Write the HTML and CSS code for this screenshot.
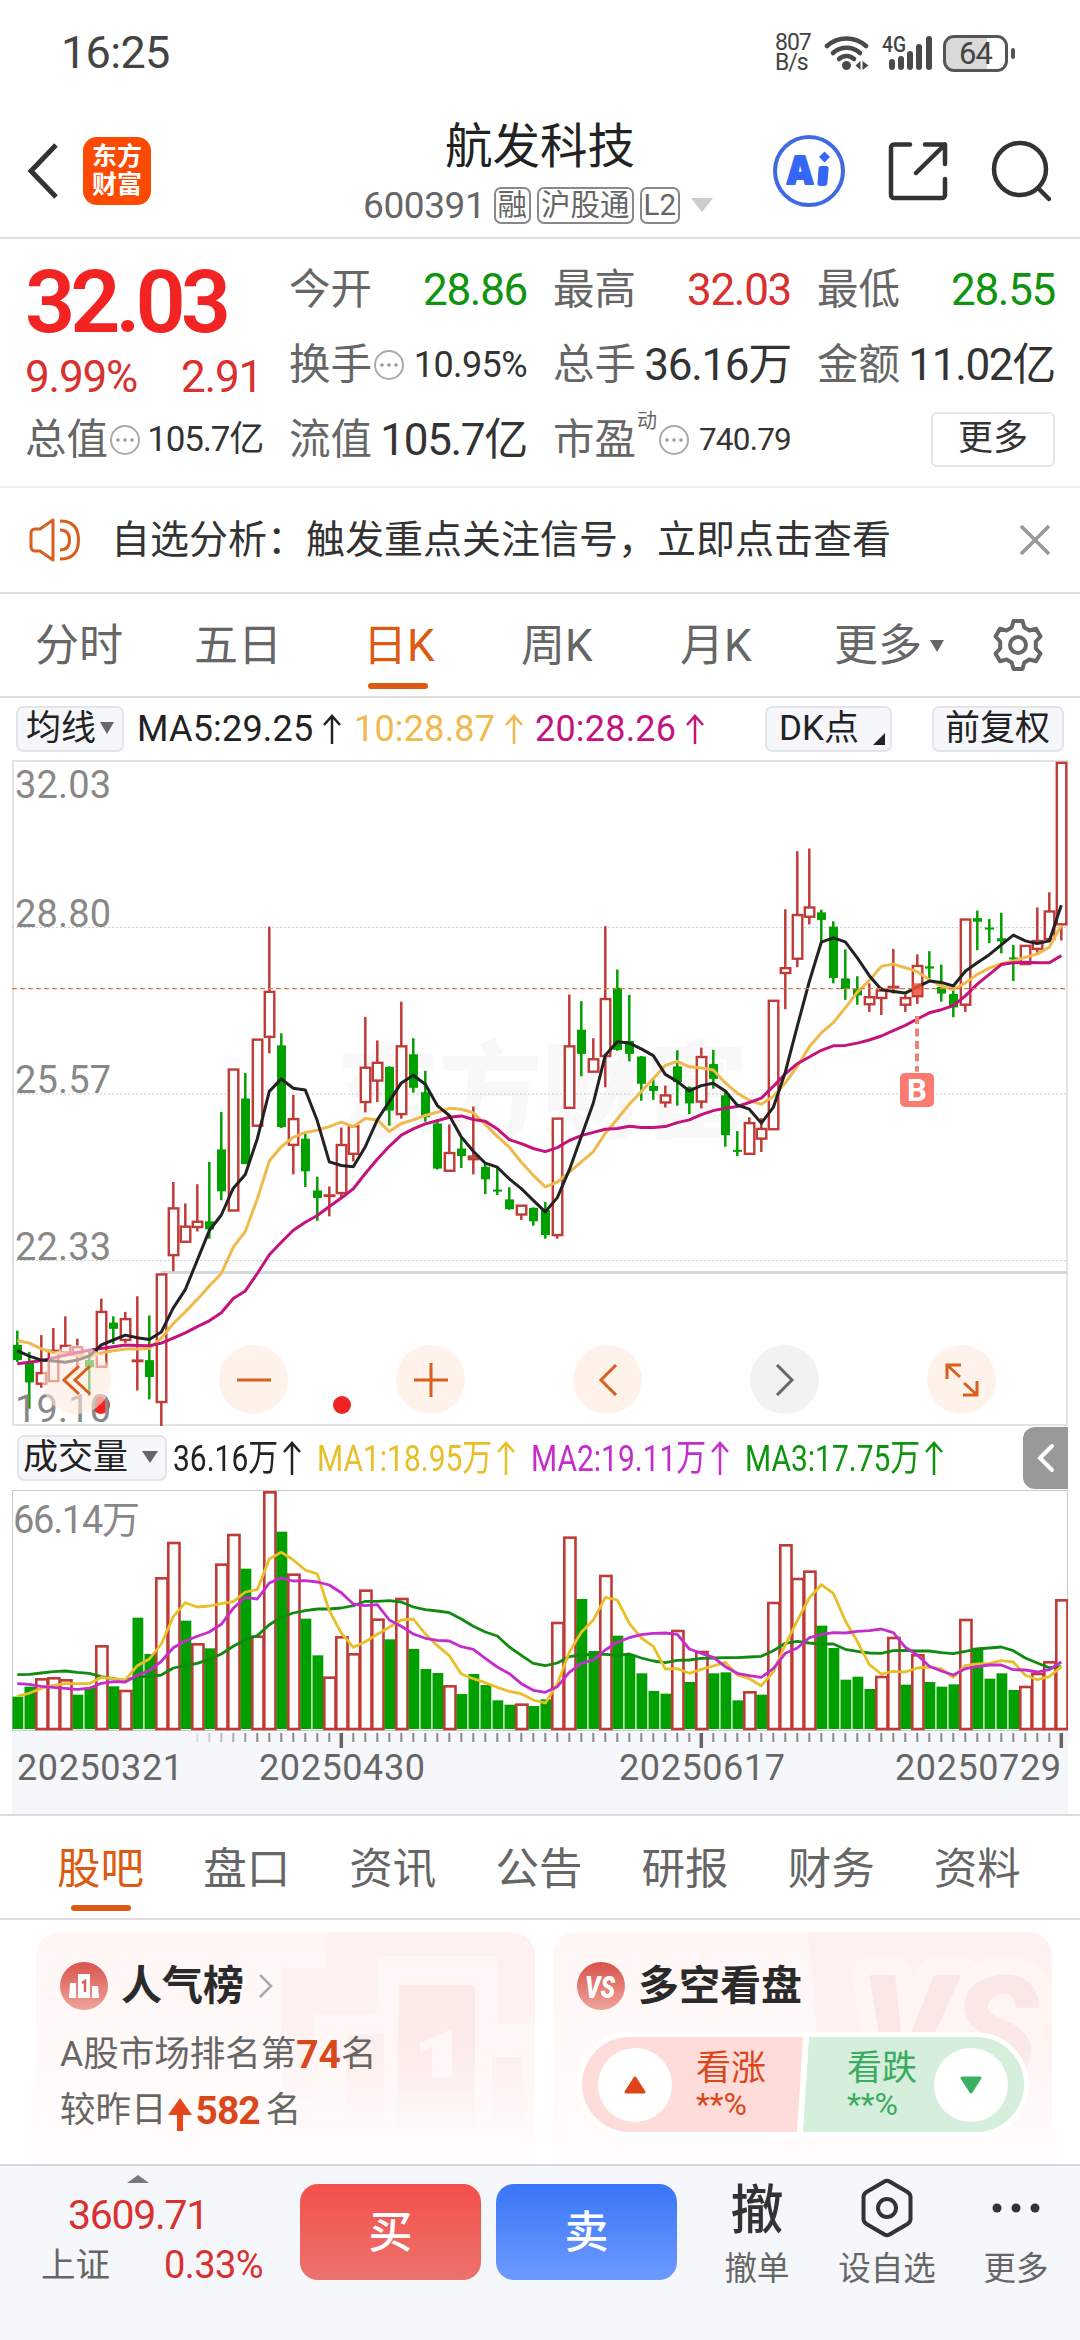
FILE: index.html
```html
<!DOCTYPE html>
<html lang="zh-CN">
<head>
    <meta charset="UTF-8">
    <meta name="viewport" content="width=device-width, initial-scale=1.0">
    <title>航发科技 600391</title>
    <link rel="stylesheet" href="styles.css">
</head>
<body>

    <!-- Status bar -->
    <div class="status-bar">
        <div class="clock">16:25</div>
        <div class="net-speed"><span>807</span><span>B/s</span></div>
        <svg class="wifi" width="46" height="36" viewBox="0 0 46 36" fill="none" stroke="#4a4a4a" stroke-width="4.6" stroke-linecap="round">
            <path d="M3 11a29 29 0 0 1 39 0"/>
            <path d="M9 18a20 20 0 0 1 27 0"/>
            <path d="M15 24a11 11 0 0 1 15 0"/>
            <circle cx="22.500" cy="30.500" r="4.500" fill="#4a4a4a" stroke="none"/>
            <path d="M36.500 26v9l-5-4.500zM38.500 26v9l6-4.500z" fill="#4a4a4a" stroke="none"/>
        </svg>
        <svg class="signal" width="52" height="36" viewBox="0 0 52 36">
            <text x="1" y="17" class="signal-text" textLength="24" lengthAdjust="spacingAndGlyphs">4G</text>
            <g fill="#4a4a4a">
                <rect x="8" y="24" width="6" height="11" rx="3"/>
                <rect x="17" y="21" width="6" height="14" rx="3"/>
                <rect x="26" y="16" width="6" height="19" rx="3"/>
                <rect x="35" y="9" width="6" height="26" rx="3"/>
                <rect x="45" y="1" width="6" height="34" rx="3"/>
            </g>
        </svg>
        <div class="battery">64</div>
        <div class="battery-tip"></div>
    </div>

    <!-- Title bar -->
    <header class="title-bar">
        <svg class="back" width="34" height="56" viewBox="0 0 34 56" fill="none" stroke="#333" stroke-width="5"><path d="M30 2L5 28l25 26"/></svg>
        <div class="logo"><span>东方</span><span>财富</span></div>
        <div class="stock">
            <div class="stock-name">航发科技</div>
            <div class="stock-code">
                <span class="code">600391</span>
                <span class="tag">融</span>
                <span class="tag">沪股通</span>
                <span class="tag">L2</span>
                <span class="caret"></span>
            </div>
        </div>
        <svg class="ai" width="72" height="72" viewBox="0 0 72 72">
            <circle cx="36" cy="36" r="34" fill="#fff" stroke="#4169e1" stroke-width="4"/>
            <text x="14" y="49" class="ai-text" textLength="26" lengthAdjust="spacingAndGlyphs">A</text>
            <path d="M48 31h5q3 0 2.600 3l-1.200 14q-.3 3-3.300 3h-4q-3 0-2.600-3l1-14q.2-3 2.500-3z" fill="#3566f5"/>
            <path d="M51.500 16.500l5.500 5.500-5.500 5.500-5.500-5.500z" fill="#3566f5"/>
        </svg>
        <svg class="share" width="62" height="62" viewBox="0 0 62 62" fill="none" stroke="#333" stroke-width="4.500" stroke-linecap="round" stroke-linejoin="round">
            <path d="M24 4.500H8a3 3 0 0 0-3 3V55a3 3 0 0 0 3 3h48a3 3 0 0 0 3-3V39"/>
            <path d="M39 4.500h20V24M59 4.500L30 33"/>
        </svg>
        <svg class="search" width="64" height="64" viewBox="0 0 64 64" fill="none" stroke="#333" stroke-width="4.500" stroke-linecap="round">
            <circle cx="30" cy="30" r="26"/>
            <path d="M48 49l11 11"/>
        </svg>
    </header>

    <!-- Quote -->
    <section class="quote">
        <div class="price-box">
            <div class="price">32.03</div>
            <div class="change"><span>9.99%</span><span>2.91</span></div>
        </div>
        <div class="item"><span class="label">今开</span><span class="value down">28.86</span></div>
        <div class="item"><span class="label">最高</span><span class="value up">32.03</span></div>
        <div class="item"><span class="label">最低</span><span class="value down">28.55</span></div>
        <div class="item"><span class="label">换手</span><i class="dots"><svg width="18" height="4" viewBox="0 0 18 4"><circle cx="2" cy="2" r="1.800"/><circle cx="9" cy="2" r="1.800"/><circle cx="16" cy="2" r="1.800"/></svg></i><span class="value small">10.95%</span></div>
        <div class="item"><span class="label">总手</span><span class="value">36.16万</span></div>
        <div class="item"><span class="label">金额</span><span class="value">11.02亿</span></div>
        <div class="item"><span class="label">总值</span><i class="dots"><svg width="18" height="4" viewBox="0 0 18 4"><circle cx="2" cy="2" r="1.800"/><circle cx="9" cy="2" r="1.800"/><circle cx="16" cy="2" r="1.800"/></svg></i><span class="value total">105.7亿</span></div>
        <div class="item"><span class="label">流值</span><span class="value">105.7亿</span></div>
        <div class="item"><span class="label">市盈</span><sup>动</sup><i class="dots"><svg width="18" height="4" viewBox="0 0 18 4"><circle cx="2" cy="2" r="1.800"/><circle cx="9" cy="2" r="1.800"/><circle cx="16" cy="2" r="1.800"/></svg></i><span class="value tiny">740.79</span></div>
        <div class="item item-more"><span class="more-btn">更多</span></div>
    </section>

    <!-- Notice -->
    <div class="notice">
        <svg width="54" height="46" viewBox="0 0 54 46" fill="none" stroke="#d95f1c" stroke-width="3" stroke-linejoin="round">
            <path d="M24 3v40L11 34H6a4 4 0 0 1-4-4V16a4 4 0 0 1 4-4h5z"/>
            <path d="M31 13c8 0 9.500 5 9.500 10S39 33 31 33"/>
            <path d="M31 4c14 0 18.500 8 18.500 19S45 42 31 42"/>
        </svg>
        <span class="notice-text">自选分析：触发重点关注信号，立即点击查看</span>
        <svg width="30" height="30" viewBox="0 0 30 30" stroke="#999" stroke-width="3.500"><path d="M1 1l28 28M29 1L1 29"/></svg>
    </div>

    <!-- Period tabs -->
    <nav class="period-tabs">
        <a>分时</a>
        <a>五日</a>
        <a class="active">日K</a>
        <a>周K</a>
        <a>月K</a>
        <a>更多<span class="tri"></span></a>
        <svg width="54" height="54" viewBox="0 0 54 54" fill="none" stroke="#666" stroke-width="4" stroke-linejoin="round">
            <path d="M22.500 3h9l1.800 6.500 5.200 3 6.500-1.800 4.500 7.800-4.700 5v7l4.700 5-4.500 7.800-6.500-1.800-5.200 3-1.800 6.500h-9l-1.800-6.500-5.200-3L9 43.300l-4.500-7.800 4.700-5v-7l-4.700-5L9 10.700l6.500 1.800 5.200-3z"/>
            <circle cx="27" cy="27" r="8"/>
        </svg>
    </nav>

    <!-- Daily K chart -->
    <div class="legend">
        <span class="btn btn-ma">均线<span class="tri"></span></span>
        <span class="ma ma5">MA5:29.25<svg class="arrow" viewBox="0 0 18 30"><path d="M9 30V2M1 11l8-9 8 9"/></svg></span>
        <span class="ma ma10">10:28.87<svg class="arrow" viewBox="0 0 18 30"><path d="M9 30V2M1 11l8-9 8 9"/></svg></span>
        <span class="ma ma20">20:28.26<svg class="arrow" viewBox="0 0 18 30"><path d="M9 30V2M1 11l8-9 8 9"/></svg></span>
        <span class="btn btn-dk">DK点<span class="corner"></span></span>
        <span class="btn btn-fq">前复权</span>
    </div>
    <div class="k-pane">
        <svg id="kChart" width="1056" height="666" viewBox="0 0 1056 666"></svg>
        <div class="tools">
            <span class="tool"><svg width="30" height="32" viewBox="0 0 30 32"><path d="M17 2L2 16l15 14M28 2L13 16l15 14"/></svg></span>
            <span class="tool"><svg width="34" height="34" viewBox="0 0 34 34"><path d="M0 17h34"/></svg></span>
            <span class="tool"><svg width="34" height="34" viewBox="0 0 34 34"><path d="M0 17h34M17 0v34"/></svg></span>
            <span class="tool"><svg width="20" height="32" viewBox="0 0 20 32"><path d="M18 1L3 16l15 15"/></svg></span>
            <span class="tool disabled"><svg width="20" height="32" viewBox="0 0 20 32"><path d="M2 1l15 15L2 31"/></svg></span>
            <span class="tool"><svg width="34" height="34" viewBox="0 0 34 34"><path d="M2 16V2h14M2 2l13 12M32 18v14H18M32 32L19 20"/></svg></span>
        </div>
    </div>

    <!-- Volume chart -->
    <div class="legend vol-legend">
        <span class="btn btn-vol">成交量<span class="tri"></span></span>
        <span class="vol v0"><b>36.16万</b><svg class="arrow" viewBox="0 0 18 34"><path d="M9 34V2M1 11l8-9 8 9"/></svg></span>
        <span class="vol v1"><b>MA1:18.95万</b><svg class="arrow" viewBox="0 0 18 34"><path d="M9 34V2M1 11l8-9 8 9"/></svg></span>
        <span class="vol v2"><b>MA2:19.11万</b><svg class="arrow" viewBox="0 0 18 34"><path d="M9 34V2M1 11l8-9 8 9"/></svg></span>
        <span class="vol v3"><b>MA3:17.75万</b><svg class="arrow" viewBox="0 0 18 34"><path d="M9 34V2M1 11l8-9 8 9"/></svg></span>
        <span class="collapse"><svg width="18" height="30" viewBox="0 0 18 30" fill="none" stroke="#fff" stroke-width="4" stroke-linecap="round"><path d="M15 3L3 15l12 12"/></svg></span>
    </div>
    <div class="vol-pane">
        <svg id="volChart" width="1056" height="324" viewBox="0 0 1056 324"></svg>
    </div>

    <!-- Content tabs -->
    <nav class="content-tabs">
        <a class="active">股吧</a>
        <a>盘口</a>
        <a>资讯</a>
        <a>公告</a>
        <a>研报</a>
        <a>财务</a>
        <a>资料</a>
    </nav>

    <main class="cards">
        <div class="card">
            <svg class="card-bg" width="260" height="232" viewBox="0 0 260 232">
                <path d="M52 0h208v232H6V36h46z" fill="#fdeeec" opacity=".55"/>
                <path d="M38 195V82h64V24h120v68h38v103z" fill="#fff7f5"/>
                <path d="M73 102h36v93H69z" fill="#fdefed"/>
                <path d="M124 53h76v142h-79z" fill="#fcebe9"/>
                <path d="M217 125h30l4 70h-34z" fill="#fdefed"/>
                <path d="M145 111l32-14v48h-20v-30l-12 6z" fill="#fff7f5"/>
            </svg>
            <div class="card-title">
                <svg width="48" height="48" viewBox="0 0 48 48">
                    <defs><linearGradient id="ico" x1="0" y1="0" x2="0" y2="1"><stop offset="0" stop-color="#d9534c"/><stop offset="1" stop-color="#f0a49c"/></linearGradient></defs>
                    <circle cx="24" cy="24" r="24" fill="url(#ico)"/>
                    <path d="M10 21h6v15H9zM18 12h12v24H18zM32 24h6l1 12h-7z" fill="#fff"/>
                    <path d="M22 21l3-2v11" fill="none" stroke="#d9625b" stroke-width="2.500"/>
                </svg>
                <span>人气榜</span>
                <svg class="chevron" width="14" height="24" viewBox="0 0 14 24" fill="none" stroke="#aaa" stroke-width="2.500"><path d="M1 1l11 11L1 23"/></svg>
            </div>
            <div class="rank-line">A股市场排名第<b>74</b>名</div>
            <div class="rank-line rank-change">较昨日<svg width="24" height="34" viewBox="0 0 24 34"><path d="M12 0l12 17h-9v16H9V17H0z" fill="#e2481a"/></svg><b>582</b><span>名</span></div>
        </div>
        <div class="card">
            <svg class="card-bg" width="244" height="232" viewBox="0 0 244 232">
                <path d="M0 0h244v232H20z" fill="#fdeeec" opacity=".6"/>
                <text x="52" y="150" class="vs-bg" textLength="178" lengthAdjust="spacingAndGlyphs">VS</text>
            </svg>
            <div class="card-title">
                <svg width="48" height="48" viewBox="0 0 48 48">
                    <circle cx="24" cy="24" r="24" fill="url(#ico)"/>
                    <text x="8" y="36" class="vs-icon" textLength="30" lengthAdjust="spacingAndGlyphs">VS</text>
                </svg>
                <span>多空看盘</span>
            </div>
            <div class="vote">
                <div class="vote-up">
                    <span class="knob"><svg width="24" height="20" viewBox="0 0 24 20"><path d="M12 3l9 14H3z" fill="#e0441a" stroke="#e0441a" stroke-width="3" stroke-linejoin="round"/></svg></span>
                    <div><p>看涨</p><p class="pct">**%</p></div>
                </div>
                <div class="vote-down">
                    <div><p>看跌</p><p class="pct">**%</p></div>
                    <span class="knob"><svg width="24" height="20" viewBox="0 0 24 20"><path d="M12 17l9-14H3z" fill="#3bb062" stroke="#3bb062" stroke-width="3" stroke-linejoin="round"/></svg></span>
                </div>
            </div>
        </div>
    </main>

    <!-- Trade bar -->
    <footer class="trade-bar">
        <div class="index">
            <span class="index-caret"></span>
            <div class="index-value">3609.71</div>
            <div class="index-row"><span>上证</span><span class="index-pct">0.33%</span></div>
        </div>
        <div class="trade buy">买</div>
        <div class="trade sell">卖</div>
        <div class="action action-cancel"><span class="action-icon">撤</span><span>撤单</span></div>
        <div class="action action-watch">
            <span class="action-icon"><svg width="54" height="60" viewBox="0 0 54 60" fill="none" stroke="#333" stroke-width="4" stroke-linejoin="round">
                <path d="M24.500 3.500q2.500-1.500 5 0l18 10.500q3 2 3 5v22q0 3-3 5l-18 10.500q-2.500 1.500-5 0l-18-10.500q-3-2-3-5V19q0-3 3-5z"/>
                <circle cx="27" cy="30" r="9"/>
            </svg></span>
            <span>设自选</span>
        </div>
        <div class="action action-more">
            <span class="action-icon"><svg width="48" height="10" viewBox="0 0 48 10" fill="#333"><circle cx="5" cy="5" r="4.500"/><circle cx="24" cy="5" r="4.500"/><circle cx="43" cy="5" r="4.500"/></svg></span>
            <span>更多</span>
        </div>
    </footer>

    <script src="chart.js"></script>
</body>
</html>
```
FILE: styles.css
```css
* {
    box-sizing: border-box;
}

body {
    margin: 0;
    width: 1080px;
    height: 2340px;
    overflow: hidden;
    background-color: #fff;
    color: #333;
    font-family: Roboto, "Noto Sans CJK SC", sans-serif;
    line-height: 1;
    display: flex;
    flex-direction: column;
}

svg {
    display: block;
    flex: none;
}

p {
    margin: 0;
}

/* Status bar */
.status-bar {
    height: 106px;
    flex: none;
    display: flex;
    align-items: center;
    padding-left: 61px;
    color: #444;
}

.clock {
    font-size: 45px;
    line-height: 54px;
    width: 714px;
    letter-spacing: -0.7px;
}

.net-speed {
    display: flex;
    flex-direction: column;
    font-size: 23px;
    width: 49px;
    letter-spacing: -1px;
}

.net-speed span {
    height: 20px;
    line-height: 20px;
}

.wifi {
    margin-right: 11px;
}

.signal-text {
    font-size: 22px;
    fill: #444;
    font-weight: 500;
}

.signal {
    margin-right: 10px;
    overflow: visible;
}

.battery {
    width: 65px;
    height: 37px;
    border: 3px solid #555;
    border-radius: 11px;
    background: linear-gradient(to right, #d9d9d9 70%, #fff 70%);
    text-align: center;
    font-size: 31px;
    line-height: 32px;
    letter-spacing: -1px;
}

.battery-tip {
    width: 4px;
    height: 11px;
    margin-left: 3px;
    border-radius: 2px;
    background-color: #555;
}

/* Title bar */
.title-bar {
    height: 133px;
    flex: none;
    display: flex;
    align-items: center;
    padding: 0 0 2px 26px;
    border-bottom: 2px solid #ddd;
}

.logo {
    width: 68px;
    height: 68px;
    margin-left: 23px;
    border-radius: 14px;
    background-color: #fc4a02;
    color: #fff;
    font-weight: bold;
    font-size: 25px;
    line-height: 28px;
    display: flex;
    flex-direction: column;
    align-items: center;
    justify-content: center;
}

.stock {
    width: 350px;
    margin-left: 212px;
}

.stock-name {
    font-size: 47.5px;
    line-height: 60px;
    margin-left: 82px;
    padding-top: 1px;
    color: #222;
    white-space: nowrap;
}

.stock-code {
    display: flex;
    align-items: center;
    height: 40px;
    margin-top: 8px;
    color: #666;
    white-space: nowrap;
}

.code {
    font-size: 37px;
    width: 126px;
    letter-spacing: -0.4px;
    margin-right: 5px;
}

.tag {
    height: 37px;
    flex: none;
    border: 2px solid #888;
    border-radius: 7px;
    font-size: 29.5px;
    line-height: 32px;
    padding: 0 2px;
    margin-right: 6px;
}

.caret {
    border: 11px solid transparent;
    border-top: 14px solid #ccc;
    border-bottom: none;
    margin-left: 5px;
}

.ai {
    margin-left: 60px;
}

.ai-text {
    font-family: "Open Sans", sans-serif;
    font-weight: 800;
    font-size: 38px;
    fill: #3566f5;
    stroke: #3566f5;
    stroke-width: 2;
    stroke-linejoin: round;
}

.share {
    margin-left: 41px;
}

.search {
    margin-left: 42px;
}

/* Quote */
.quote {
    height: 249px;
    flex: none;
    display: grid;
    grid-template-columns: 238px 238px 238px 238px;
    grid-template-rows: 75px 75px 75px;
    column-gap: 26px;
    padding: 13px 0 0 25px;
    border-bottom: 2px solid #eee;
}

.price-box {
    grid-row: span 2;
}

.price {
    font-size: 88px;
    font-weight: 600;
    line-height: 100px;
    letter-spacing: -5px;
    color: #f12323;
}

.change {
    display: flex;
    justify-content: space-between;
    padding-right: 1px;
    margin-top: -2px;
    font-size: 44px;
    line-height: 54px;
    letter-spacing: -1.2px;
    color: #d93030;
}

.item {
    display: flex;
    align-items: center;
    white-space: nowrap;
}

.label {
    font-size: 41.5px;
    color: #666;
}

.value {
    margin-left: auto;
    font-size: 44px;
    letter-spacing: -1.3px;
}

.value.small {
    font-size: 36px;
    letter-spacing: -0.6px;
}

.value.total {
    font-size: 35px;
    letter-spacing: -1.2px;
}

.value.tiny {
    font-size: 31.5px;
    letter-spacing: -0.8px;
}

.up {
    color: #d93030;
}

.down {
    color: #109410;
}

.dots {
    width: 30px;
    height: 30px;
    flex: none;
    margin-left: 2px;
    border: 2px solid #aaa;
    border-radius: 50%;
    display: flex;
    align-items: center;
    justify-content: center;
}

.dots svg {
    fill: #999;
}

sup {
    font-size: 20px;
    line-height: 20px;
    color: #666;
    margin: -38px 0 0 1px;
}

.item-more {
    justify-content: flex-end;
}

.more-btn {
    width: 124px;
    height: 55px;
    border: 2px solid #e5e5e5;
    border-radius: 6px;
    font-size: 35px;
    line-height: 50px;
    text-align: center;
}

/* Notice */
.notice {
    height: 106px;
    flex: none;
    display: flex;
    align-items: center;
    padding-left: 29px;
    border-bottom: 2px solid #ddd;
}

.notice-text {
    width: 935px;
    padding-left: 28px;
    margin-right: 2px;
    font-size: 39px;
}

/* Period tabs */
.period-tabs {
    height: 104px;
    flex: none;
    display: flex;
    align-items: center;
    padding-left: 35px;
    border-bottom: 2px solid #ddd;
    font-size: 44px;
    color: #666;
}

.period-tabs a {
    width: 159px;
    height: 102px;
    line-height: 105px;
    white-space: nowrap;
}

.period-tabs a:nth-child(3) {
    margin-left: 10px;
    width: 158px;
}

.period-tabs a:nth-child(5) {
    width: 154px;
}

.period-tabs .active,
.content-tabs .active {
    color: #dc5a12;
    position: relative;
}

.period-tabs .active::after,
.content-tabs .active::after {
    content: "";
    position: absolute;
    left: 5px;
    bottom: 7px;
    width: 60px;
    height: 6px;
    border-radius: 3px;
    background-color: #dc5a12;
}

.tri {
    display: inline-block;
    border: 7px solid transparent;
    border-top: 12px solid #666;
    border-bottom: none;
    margin-left: 8px;
    vertical-align: 9px;
}

.period-tabs svg {
    margin-left: -2px;
}

/* Chart legends */
.legend {
    height: 62px;
    flex: none;
    display: flex;
    align-items: center;
    padding-left: 16px;
    color: #222;
    white-space: nowrap;
}

.btn {
    height: 46px;
    border: 2px solid #e3e5e9;
    border-radius: 7px;
    background-color: #f6f7fa;
    font-size: 35px;
    line-height: 42px;
    padding-left: 8px;
    position: relative;
}

.btn .tri {
    margin-left: 4px;
    vertical-align: 6px;
}

.btn-ma {
    width: 108px;
    margin-right: 13px;
}

.btn-dk {
    width: 127px;
    padding-left: 12px;
    margin-left: 50px;
}

.btn-fq {
    width: 132px;
    padding-left: 11px;
    margin-left: 40px;
}

.corner {
    position: absolute;
    right: 5px;
    bottom: 5px;
    border-left: 12px solid transparent;
    border-bottom: 12px solid #222;
}

.arrow {
    display: inline-block;
    width: 18px;
    height: 30px;
    margin-left: 10px;
    vertical-align: -3px;
    fill: none;
    stroke: currentColor;
    stroke-width: 2.5;
}

.ma {
    font-size: 36px;
    letter-spacing: 0.2px;
}

.ma5 {
    width: 217px;
}

.ma10 {
    width: 181px;
    color: #f0b94c;
}

.ma20 {
    width: 180px;
    color: #c4137c;
}

.vol-legend {
    height: 64px;
    padding-left: 17px;
}

.btn-vol {
    width: 150px;
    padding-left: 4px;
    margin-right: 6px;
}

.btn-vol .tri {
    margin-left: 14px;
    border-left-width: 8px;
    border-right-width: 8px;
}

.vol {
    display: flex;
    align-items: center;
    width: 214px;
    font-size: 37px;
}

.vol b {
    font-weight: normal;
    width: 180px;
    transform: scaleX(0.81);
    transform-origin: left;
}

.v0 {
    width: 144px;
}

.v0 b {
    width: 110px;
}

.vol .arrow {
    height: 34px;
    margin-left: 0;
}

.v1 {
    color: #e8bf27;
}

.v2 {
    color: #c42dcc;
}

.v3 {
    color: #109410;
}

.collapse {
    width: 45px;
    height: 62px;
    margin-left: 64px;
    border-radius: 12px 0 0 12px;
    background-color: #999;
    display: flex;
    align-items: center;
    justify-content: center;
}

/* Charts */
.k-pane {
    position: relative;
    height: 666px;
    flex: none;
    margin-left: 12px;
}

.vol-pane {
    height: 326px;
    flex: none;
    padding-left: 12px;
    border-bottom: 2px solid #ddd;
}

.tools {
    position: absolute;
    left: 30px;
    bottom: 12px;
    display: flex;
    gap: 108px;
}

.tool {
    width: 69px;
    height: 69px;
    border-radius: 50%;
    background-color: rgba(255, 233, 222, 0.6);
    display: flex;
    align-items: center;
    justify-content: center;
}

.tool svg {
    fill: none;
    stroke: #d95f1c;
    stroke-width: 3;
}

.tool.disabled {
    background-color: #f2f2f2;
}

.tool.disabled svg {
    stroke: #666;
}

.axis-price {
    font-size: 38px;
    fill: #888;
}

.axis-date {
    font-size: 36px;
    fill: #666;
}

.watermark {
    font-size: 104px;
    font-weight: 900;
    fill: #f8f8f8;
}

.mark-b {
    font-size: 31px;
    font-weight: bold;
    fill: #fff;
}

/* Content tabs */
.content-tabs {
    height: 104px;
    flex: none;
    display: flex;
    padding-left: 57px;
    border-bottom: 2px solid #ddd;
    font-size: 43.5px;
    line-height: 107px;
    color: #666;
}

.content-tabs a {
    width: 146.6px;
    height: 102px;
}

.content-tabs .active::after {
    left: 14px;
    bottom: 7px;
}

/* Cards */
.cards {
    height: 244px;
    flex: none;
    display: flex;
    gap: 18px;
    padding: 12px 0 0 36px;
}

.card {
    position: relative;
    width: 499px;
    height: 232px;
    padding: 30px 0 0 24px;
    border-radius: 24px 24px 0 0;
    background: linear-gradient(#fff6f4, #fffdfc);
    overflow: hidden;
}

.card-bg {
    position: absolute;
    top: 0;
    right: 0;
    -webkit-mask-image: linear-gradient(#000 50%, transparent 92%);
    mask-image: linear-gradient(#000 50%, transparent 92%);
}

.card-title {
    position: relative;
    display: flex;
    align-items: center;
    height: 48px;
    font-size: 41px;
    font-weight: bold;
    color: #2a2a2a;
}

.card-title span {
    margin-left: 13px;
}

.chevron {
    margin-left: 15px;
}

.rank-line {
    position: relative;
    display: flex;
    align-items: center;
    height: 56px;
    margin-top: 17px;
    font-size: 35.5px;
    color: #666;
}

.rank-line b {
    color: #d9481c;
    font-size: 39px;
}

.rank-change {
    margin-top: 0;
}

.rank-change svg {
    margin: 8px 4px 0 1px;
}

.rank-change b {
    letter-spacing: -1px;
}

.rank-change span {
    margin-left: 6px;
}

.vs-bg {
    font-size: 150px;
    font-weight: 900;
    font-style: italic;
    fill: #fbe8e6;
    stroke: #fff5f3;
    stroke-width: 36px;
    stroke-linejoin: round;
    paint-order: stroke;
}

.vs-icon {
    font-size: 32px;
    font-weight: 900;
    font-style: italic;
    fill: #fff;
}

.vote {
    position: relative;
    display: flex;
    gap: 5px;
    width: 452px;
    height: 106px;
    margin: 22px 0 0 0;
    padding: 5px;
    border-radius: 53px;
    background-color: #fff;
    font-size: 35px;
    line-height: 42px;
}

.vote-up,
.vote-down {
    display: flex;
    align-items: center;
    height: 95px;
}

.vote-up {
    width: 221px;
    padding-left: 16px;
    gap: 24px;
    border-radius: 48px 0 0 48px;
    background-color: #fddcd9;
    color: #d9481c;
    clip-path: polygon(0 0, 100% 0, calc(100% - 6px) 100%, 0 100%);
}

.vote-down {
    width: 221px;
    margin-left: -5px;
    padding-left: 44px;
    gap: 17px;
    border-radius: 0 48px 48px 0;
    background-color: #d6efdd;
    color: #3aab60;
    clip-path: polygon(6px 0, 100% 0, 100% 100%, 0 100%);
}

.pct {
    font-size: 32px;
    line-height: 36px;
    margin-top: -4px;
}

.knob {
    width: 74px;
    height: 74px;
    border-radius: 50%;
    background-color: #fff;
    display: flex;
    align-items: center;
    justify-content: center;
}

/* Trade bar */
.trade-bar {
    flex: 1;
    display: flex;
    align-items: flex-start;
    background-color: #f6f7fa;
    border-top: 2px solid #d5d8dc;
}

.index {
    display: flex;
    flex-direction: column;
    width: 300px;
    padding: 9px 0 0 41px;
    color: #d93030;
}

.index-caret {
    border: 11px solid transparent;
    border-bottom: 8px solid #777;
    border-top: none;
    width: 22px;
    margin-left: 86px;
}

.index-value {
    font-size: 41px;
    line-height: 50px;
    margin: 7px 0 0 27px;
    letter-spacing: -1.3px;
}

.index-row {
    display: flex;
    gap: 54px;
    align-items: center;
    font-size: 34.5px;
    line-height: 50px;
}

.index-row span:first-child {
    color: #666;
}

.index-pct {
    font-size: 38px;
    letter-spacing: -0.6px;
}

.trade {
    width: 181px;
    height: 96px;
    margin: 18px 15px 0 0;
    border-radius: 18px;
    color: #fff;
    font-size: 44px;
    font-weight: 500;
    line-height: 98px;
    text-align: center;
}

.buy {
    background: linear-gradient(#f4504b, #ec726c);
}

.sell {
    background: linear-gradient(#3a75f8, #6d9afd);
}

.action {
    display: flex;
    flex-direction: column;
    align-items: center;
    font-size: 32.5px;
    color: #666;
    white-space: nowrap;
}

.action-icon {
    height: 60px;
    margin: 12px 0 15px;
    display: flex;
    align-items: center;
    font-size: 53px;
    font-weight: 500;
    color: #333;
}

.action-cancel {
    width: 68px;
    margin-left: 31px;
}

.action-cancel .action-icon {
    padding-top: 6px;
}

.action-watch {
    width: 100px;
    margin-left: 46px;
}

.action-more {
    width: 66px;
    margin-left: 46px;
}
```
FILE: chart.js
```js
const RED = '#c03a36';
const GREEN = '#00a000';
const STEP = 12;
const X0 = 5.3;

// [up?, high, body top, body bottom, low], measured down the pane
const candles = [
    [0,1300,1332,1366,1370],[0,1348,1372,1416,1475],[1,1310,1394,1420,1428],[1,1294,1344,1414,1414],
    [1,1268,1333,1350,1352],[1,1318,1336,1350,1388],[0,1347,1366,1382,1446],[1,1228,1257,1382,1382],
    [0,1268,1282,1296,1330],[1,1258,1273,1322,1328],[1,1223,1366,1369,1434],[0,1266,1366,1404,1454],
    [1,1173,1173,1461,1514],[1,967,1025,1132,1167],[1,1015,1066,1102,1102],[1,972,1055,1069,1078],
    [0,922,1055,1073,1094],[0,810,894,988,1008],[1,714,714,1032,1032],[0,723,780,927,927],
    [1,647,647,842,842],[1,395,540,643,679],[0,634,661,844,846],[1,772,825,885,950],
    [0,855,870,943,978],[0,955,986,1003,1054],[1,977,996,998,1044],[1,845,883,993,1005],
    [1,841,841,905,921],[1,597,710,789,811],[1,650,699,741,788],[0,708,709,807,841],
    [1,563,662,816,825],[0,645,681,756,767],[0,718,766,822,832],[0,826,836,937,939],
    [1,838,901,943,943],[0,867,892,909,936],[1,798,909,917,950],[0,925,933,961,994],
    [0,935,984,988,996],[0,979,1006,1028,1029],[1,1019,1019,1041,1052],[0,1024,1025,1055,1065],
    [0,1012,1030,1086,1094],[1,824,824,1087,1094],[1,547,662,802,802],[0,562,626,680,730],
    [1,645,691,721,721],[1,394,556,686,755],[0,491,532,671,673],[0,548,651,680,697],
    [0,685,686,747,785],[0,737,752,763,783],[1,751,772,790,800],[0,672,708,743,796],
    [0,753,755,791,815],[1,666,686,788,802],[0,671,703,736,758],[0,766,773,862,888],
    [0,853,895,899,909],[1,822,834,905,905],[1,824,847,871,900],[1,560,560,850,850],
    [1,356,487,500,580],[1,226,368,468,486],[1,220,351,374,390],[0,357,363,380,432],
    [0,383,395,510,522],[0,446,511,535,559],[0,506,535,549,570],[1,522,552,570,586],
    [1,530,537,556,593],[1,445,529,532,545],[1,547,554,571,586],[1,457,482,552,568],
    [0,450,484,489,519],[0,480,530,545,563],[0,537,546,576,598],[1,378,378,571,586],
    [0,359,376,384,448],[0,378,397,400,432],[0,364,421,428,455],[0,436,464,468,517],
    [1,437,437,480,480],[1,352,426,446,457],[1,318,360,424,430],[1,27,27,391,426]
];

const ma5 = [1345,1357,1366,1368,1371,1366,1357,1332,1321,1310,1316,1320,1303,1249,1208,1142,1076,1041,981,950,870,764,736,757,761,830,922,930,933,888,828,787,745,728,748,796,818,866,898,925,934,960,982,1008,1034,1002,940,865,790,683,653,656,669,684,726,742,763,751,746,763,795,804,835,800,721,618,518,430,420,429,465,505,536,540,544,530,517,520,528,495,476,458,436,414,427,433,427,347];
const ma10 = [1322,1328,1341,1349,1352,1355,1358,1350,1345,1341,1341,1340,1317,1284,1258,1230,1200,1172,1113,1078,1005,920,888,867,856,851,843,833,843,825,828,854,836,828,818,811,802,804,812,838,865,889,923,952,978,967,945,922,899,858,826,793,764,735,706,697,709,712,716,745,768,784,793,775,745,708,664,633,610,577,542,516,484,479,487,496,514,528,536,521,502,488,478,472,464,456,441,392];
const ma20 = [1374,1371,1367,1361,1355,1349,1344,1340,1336,1332,1333,1334,1328,1317,1305,1291,1278,1260,1228,1211,1172,1130,1102,1075,1057,1042,1022,1003,982,948,916,887,862,848,837,830,822,819,827,831,848,872,881,892,899,890,874,863,856,849,847,842,845,845,843,834,828,816,807,802,798,789,779,753,725,702,687,672,662,661,656,649,640,628,616,602,588,581,572,550,524,502,480,476,475,476,476,460];

// days that closed higher, the rest are drawn green
const upDays = new Set([2,3,4,7,9,12,13,15,17,18,20,21,23,26,27,28,29,30,32,36,42,45,46,49,55,57,61,63,64,65,66,72,73,75,79,84,85,86,87]);
const vol = [828,798,773,770,776,822,800,674,797,808,591,700,470,364,600,668,683,429,340,444,645,212,333,459,594,704,768,647,698,507,594,656,532,685,745,757,794,820,760,793,839,852,849,856,836,604,348,535,691,463,645,702,758,811,819,628,784,691,758,755,839,812,822,544,371,472,450,615,682,777,768,805,766,649,792,701,784,798,791,595,681,774,758,808,796,757,722,536];
const vma1 = [826,818,803,794,789,789,789,770,774,778,735,715,670,588,546,559,556,549,543,514,507,415,395,418,448,460,570,637,680,663,641,620,598,595,640,675,705,760,774,786,800,812,819,838,847,790,695,635,598,530,538,608,652,677,745,744,758,746,736,725,763,774,795,754,672,600,532,492,518,600,662,732,760,752,754,742,739,745,770,735,730,728,720,724,764,777,768,738];
const vma2 = [789,791,797,800,803,806,803,788,783,784,764,750,722,681,661,647,634,611,563,530,535,487,472,481,480,484,493,516,550,555,552,598,617,640,653,659,661,678,686,713,739,759,789,809,815,798,755,728,718,688,665,651,642,638,637,641,685,698,710,738,758,765,770,744,698,682,651,642,636,637,632,630,625,636,680,703,737,751,763,744,738,733,733,747,748,754,747,724];
const vma3 = [762,761,757,753,751,755,758,768,774,780,768,768,763,742,735,728,716,700,677,657,645,612,590,577,570,565,565,562,555,542,542,540,544,559,567,571,576,595,617,634,646,679,704,728,735,727,708,703,701,701,704,700,712,721,726,719,718,713,712,711,711,709,707,690,668,662,667,670,670,686,692,697,698,690,689,691,691,696,699,692,685,682,679,690,712,727,741,738];

const kx = i => X0 + i * STEP;
const ky = v => (v - 24) / 2.24 + 1;
const vy = v => (v - 211) / 3 + 1;

function line(x1, y1, x2, y2, color, width, dash) {
    return `<line x1="${x1}" y1="${y1}" x2="${x2}" y2="${y2}" stroke="${color}" stroke-width="${width}"${dash ? ` stroke-dasharray="${dash}"` : ''}/>`;
}

function curve(values, y, color, width) {
    const points = values.map((v, i) => kx(i) + ',' + y(v).toFixed(1)).join(' ');
    return `<polyline points="${points}" fill="none" stroke="${color}" stroke-width="${width}" stroke-linejoin="round"/>`;
}

function drawK() {
    let s = '';
    s += `<text x="324" y="370" class="watermark" textLength="412" lengthAdjust="spacingAndGlyphs">东方财富</text>`;
    s += `<rect x="1" y="1" width="1054" height="664" fill="none" stroke="#e3e3e3" stroke-width="2"/>`;
    [397, 770, 1143].forEach(v => s += line(0, ky(v), 1056, ky(v), '#ccc', 1, '2 2'));
    s += line(149, ky(1170), 1055, ky(1170), '#d3d8dc', 3);

    candles.forEach(([up, high, top, bottom, low], i) => {
        const x = kx(i);
        const color = up ? RED : GREEN;
        s += line(x, ky(high), x, ky(low), color, 2.5);
        if (up) {
            const h = Math.max(ky(bottom) - ky(top) - 1, 0.5);
            s += `<rect x="${x - 4.5}" y="${ky(top) + 0.5}" width="9.5" height="${h}" fill="#fff" stroke="${RED}" stroke-width="2.4"/>`;
        } else {
            s += `<rect x="${x - 4.3}" y="${ky(top)}" width="9" height="${Math.max(ky(bottom) - ky(top), 2)}" fill="${GREEN}"/>`;
        }
    });

    s += curve(ma10, ky, '#f0b94c', 3);
    s += curve(ma20, ky, '#c4137c', 3);
    s += curve(ma5, ky, '#222', 3);
    s += line(0, ky(534), 1056, ky(534), '#cf7c4c', 1.3, '5 3');

    // Buy mark
    s += `<rect x="900" y="${ky(522)}" width="10" height="12" rx="2" fill="#f0503c" opacity=".85"/>`;
    s += line(905, ky(595), 905, ky(720), '#ea8478', 4, '8 4.5');
    s += `<rect x="888" y="313" width="34" height="34" rx="5" fill="#fb7c6e"/>`;
    s += `<text x="905" y="341" class="mark-b" text-anchor="middle">B</text>`;

    s += `<circle cx="89" cy="645" r="9" fill="#f12323"/><circle cx="330" cy="645" r="9" fill="#f12323"/>`;
    [['32.03', 38], ['28.80', 167], ['25.57', 333], ['22.33', 500], ['19.10', 662]].forEach(([t, y]) => {
        s += `<text x="3" y="${y}" class="axis-price" textLength="96">${t}</text>`;
    });
    document.getElementById('kChart').innerHTML = s;
}

function drawVolume() {
    let s = '';
    s += `<rect x="0" y="241" width="1056" height="83" fill="#f6f7fa"/>`;
    s += `<rect x=".5" y=".5" width="1055" height="240" fill="none" stroke="#ccc"/>`;
    s += `<text x="1" y="43" class="axis-price" textLength="127">66.14万</text>`;
    vol.forEach((v, i) => {
        const x = kx(i) + 0.6;
        if (upDays.has(i)) {
            s += `<rect x="${x - 5.6}" y="${vy(v) + 1}" width="11.2" height="${238 - vy(v)}" fill="#fff" stroke="${RED}" stroke-width="2.6"/>`;
        } else {
            s += `<rect x="${x - 5.4}" y="${vy(v)}" width="10.8" height="${239 - vy(v)}" fill="${GREEN}"/>`;
        }
    });
    s += curve(vma3, vy, '#128a12', 2.8);
    s += curve(vma1, vy, '#e8bf27', 2.8);
    s += curve(vma2, vy, '#c42dcc', 2.8);

    for (let i = 15; i < 88; i++) {
        const big = i === 27 || i === 57 || i === 87;
        const color = big ? '#666' : i < 20 ? ['#ddd', '#ccc', '#bbb', '#aaa', '#999'][i - 15] : '#888';
        s += line(kx(i), 243, kx(i), big ? 258 : 252, color, big ? 3.5 : 2);
    }
    [['20250321', 5], ['20250430', 247], ['20250617', 607], ['20250729', 883]].forEach(([t, x]) => {
        s += `<text x="${x}" y="290" class="axis-date" textLength="166">${t}</text>`;
    });
    document.getElementById('volChart').innerHTML = s;
}

drawK();
drawVolume();
```
